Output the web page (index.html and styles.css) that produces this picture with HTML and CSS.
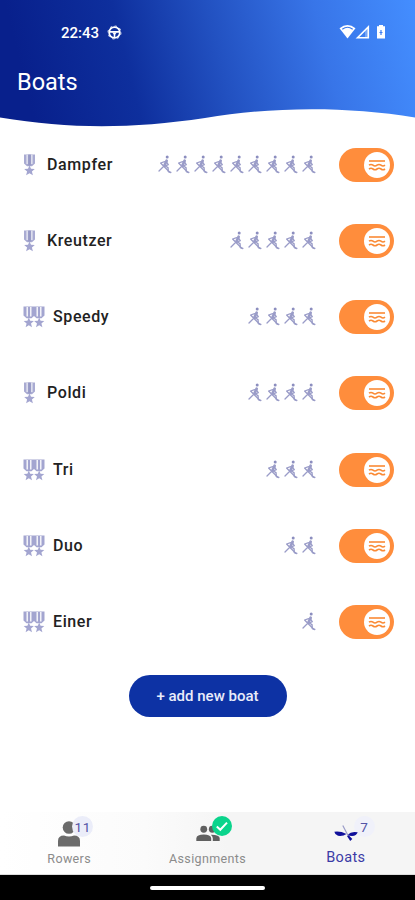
FILE: index.html
```html
<!DOCTYPE html>
<html lang="en">

<head>
    <meta charset="UTF-8">
    <meta name="viewport" content="width=device-width, initial-scale=1.0">
    <title>Boats</title>
    <link rel="stylesheet" href="styles.css">
</head>

<body>
    <!-- shared icons -->
    <svg class="icons">
        <symbol id="medal" viewBox="0 0 13 22">
            <path d="M1 0.5h11v9L9 12.3H4L1 9.5z" fill="#a9abd2" />
            <path d="M4.1 1v9M8.9 1v9" stroke="#fff" stroke-width="1" />
            <path d="M5.2 0.5h2.6v11H5.2z" fill="#9698c5" />
            <path d="M6.5 11.500l1.500 3.300 3.800.2-2.900 2.400 1 3.800-3.400-2-3.400 2 1-3.800-2.900-2.400 3.800-.2z" fill="#a3a5d0" />
        </symbol>
        <symbol id="medals" viewBox="0 0 22 22">
            <path d="M0.5 0.5h21v9l-3 2.8h-5L11 10l-2.5 2.3h-5l-3-2.8z" fill="#a3a5d0" />
            <path d="M4.2 1v9.5M7.8 1v9.5M14.2 1v9.5M17.8 1v9.5" stroke="#fff" stroke-width="1.3" />
            <path d="M5.800 11.500l1.400 3.300 3.700.2-2.900 2.400 1 3.800-3.200-2-3.200 2 1-3.800-2.900-2.400 3.700-.2zM16.200 11.500l1.400 3.300 3.700.2-2.900 2.400 1 3.800-3.200-2-3.200 2 1-3.800-2.900-2.400 3.700-.2z" fill="#a3a5d0" />
        </symbol>
        <symbol id="rower" viewBox="0 0 18 22">
            <g fill="none" stroke="#9a9cc8" stroke-linecap="round" stroke-linejoin="round">
                <path d="M10.600 6.800L8.600 11" stroke-width="2.800" />
                <path d="M8.600 7.600L4.600 9L8.500 13L13.500 18" stroke-width="1.300" />
                <path d="M10.500 8L12.300 10.600L7 13L3 17" stroke-width="1.300" />
                <path d="M8.500 11.500L12 13.600L12.300 17.500L14.800 18.500" stroke-width="1.400" />
            </g>
            <circle cx="11.200" cy="3" r="1.500" fill="#8c8ebf" />
        </symbol>
        <symbol id="waves" viewBox="0 0 18 14">
            <g fill="none" stroke="#fa8a35" stroke-width="1.600">
                <path d="M1 3h16" />
                <path d="M1 7.200q2-1.500 4 0t4 0t4 0t4 0" />
                <path d="M1 11q2-1.500 4 0t4 0t4 0t4 0" />
            </g>
        </symbol>
    </svg>

    <header class="header">
        <div class="status-bar">
            <div class="status-left">
                <span>22:43</span>
                <svg class="wheel-icon" viewBox="0 0 16 16" fill="none" stroke="#fff">
                    <circle cx="8" cy="8" r="5.700" stroke-width="1.900" />
                    <circle cx="8" cy="8" r="7" stroke-width="0.800" stroke-dasharray="2.500 3" />
                    <path d="M3 7.300h10M8 9v4" stroke-width="1.700" />
                    <path d="M5.500 8h5L8 11z" fill="#fff" stroke="none" />
                </svg>
            </div>
            <svg class="signal-icons" viewBox="0 0 48 16">
                <path d="M0.500 4.200Q8.500-2.400 16.500 4.200L8.500 14.500z" fill="#fff" />
                <path d="M3.300 5.200Q8.500 1.300 13.700 5.200" fill="none" stroke="#3b78ea" stroke-width="1.200" />
                <path d="M18.500 13.700L29.300 3V13.700z" fill="none" stroke="#fff" stroke-width="1.600" />
                <path d="M26 7v6h3V4z" fill="#fff" opacity=".3" />
                <path d="M38 2.300h2V1h4v1.300h2v12.200h-8z" fill="#fff" />
                <path d="M42 6v5M40.500 8.500h3" stroke="#3d7df2" stroke-width="1.200" />
            </svg>
        </div>
        <h1 class="title">Boats</h1>
        <svg class="wave" viewBox="0 0 415 22" preserveAspectRatio="none">
            <path d="M0 12.500C70 24 130 24 205 13C270 2 345 1 415 12.500V22H0z" fill="#fff" />
        </svg>
    </header>

    <main class="boats">
        <div class="boat">
            <svg class="medal"><use href="#medal" /></svg>
            <span class="name">Dampfer</span>
            <div class="seats">
                <svg><use href="#rower" /></svg>
                <svg><use href="#rower" /></svg>
                <svg><use href="#rower" /></svg>
                <svg><use href="#rower" /></svg>
                <svg><use href="#rower" /></svg>
                <svg><use href="#rower" /></svg>
                <svg><use href="#rower" /></svg>
                <svg><use href="#rower" /></svg>
                <svg><use href="#rower" /></svg>
            </div>
            <div class="toggle"><div class="knob"><svg><use href="#waves" /></svg></div></div>
        </div>

        <div class="boat">
            <svg class="medal"><use href="#medal" /></svg>
            <span class="name">Kreutzer</span>
            <div class="seats">
                <svg><use href="#rower" /></svg>
                <svg><use href="#rower" /></svg>
                <svg><use href="#rower" /></svg>
                <svg><use href="#rower" /></svg>
                <svg><use href="#rower" /></svg>
            </div>
            <div class="toggle"><div class="knob"><svg><use href="#waves" /></svg></div></div>
        </div>

        <div class="boat">
            <svg class="medal double"><use href="#medals" /></svg>
            <span class="name">Speedy</span>
            <div class="seats">
                <svg><use href="#rower" /></svg>
                <svg><use href="#rower" /></svg>
                <svg><use href="#rower" /></svg>
                <svg><use href="#rower" /></svg>
            </div>
            <div class="toggle"><div class="knob"><svg><use href="#waves" /></svg></div></div>
        </div>

        <div class="boat">
            <svg class="medal"><use href="#medal" /></svg>
            <span class="name">Poldi</span>
            <div class="seats">
                <svg><use href="#rower" /></svg>
                <svg><use href="#rower" /></svg>
                <svg><use href="#rower" /></svg>
                <svg><use href="#rower" /></svg>
            </div>
            <div class="toggle"><div class="knob"><svg><use href="#waves" /></svg></div></div>
        </div>

        <div class="boat">
            <svg class="medal double"><use href="#medals" /></svg>
            <span class="name">Tri</span>
            <div class="seats">
                <svg><use href="#rower" /></svg>
                <svg><use href="#rower" /></svg>
                <svg><use href="#rower" /></svg>
            </div>
            <div class="toggle"><div class="knob"><svg><use href="#waves" /></svg></div></div>
        </div>

        <div class="boat">
            <svg class="medal double"><use href="#medals" /></svg>
            <span class="name">Duo</span>
            <div class="seats">
                <svg><use href="#rower" /></svg>
                <svg><use href="#rower" /></svg>
            </div>
            <div class="toggle"><div class="knob"><svg><use href="#waves" /></svg></div></div>
        </div>

        <div class="boat">
            <svg class="medal double"><use href="#medals" /></svg>
            <span class="name">Einer</span>
            <div class="seats">
                <svg><use href="#rower" /></svg>
            </div>
            <div class="toggle"><div class="knob"><svg><use href="#waves" /></svg></div></div>
        </div>

        <button class="add-btn">+ add new boat</button>
    </main>

    <nav class="tabs">
        <div class="tab">
            <div class="tab-icon">
                <svg class="rowers-icon" viewBox="0 0 24 26" fill="#6b6b6b">
                    <circle cx="12" cy="6.500" r="6.300" />
                    <path d="M1 25.500V20q0-5.500 6-5.500 5 2 10 0 6 0 6 5.500v5.500z" />
                </svg>
                <span class="badge">11</span>
            </div>
            <span class="label">Rowers</span>
        </div>
        <div class="tab">
            <div class="tab-icon">
                <svg class="group-icon" viewBox="0 0 24 16" fill="#606060">
                    <circle cx="8" cy="4" r="3.200" />
                    <circle cx="16" cy="4" r="3.200" />
                    <path d="M1 15v-2.500Q1.500 9 8 9t7 3.500V15zM16.500 15v-2.500q0-2-1.800-3.400Q23 9 23 12.500V15z" />
                </svg>
                <svg class="check" viewBox="0 0 20 20">
                    <circle cx="10" cy="10" r="10" fill="#0bd48c" />
                    <path d="M4.800 10.500l3.500 3.300 6.700-7.200" fill="none" stroke="#fff" stroke-width="2" />
                </svg>
            </div>
            <span class="label">Assignments</span>
        </div>
        <div class="tab active">
            <div class="tab-icon">
                <span class="badge">7</span>
                <svg class="boat-icon" viewBox="0 0 24 18" fill="#10109a">
                    <path d="M0.300 7.800Q6 6.800 12.500 10Q9 12.500 4 11.800Q1 11 0.300 7.800z" />
                    <path d="M14 10.500Q17 7 23.700 8.300Q22.500 12 18 12Q15 12 14 10.500z" />
                    <path d="M14.500 11L18.300 15L16.200 17L13 12z" />
                    <path d="M8.800 1.500L14 11.500" fill="none" stroke="#9a9cc8" stroke-width="1.200" />
                </svg>
            </div>
            <span class="label">Boats</span>
        </div>
    </nav>

    <div class="system-nav">
        <div class="home-bar"></div>
    </div>
</body>

</html>
```
FILE: styles.css
```css
* {
    box-sizing: border-box;
}

body {
    margin: 0;
    width: 415px;
    height: 900px;
    display: flex;
    flex-direction: column;
    background-color: #fff;
    font-family: Roboto, "Liberation Sans", sans-serif;
    overflow: hidden;
}

svg {
    display: block;
    flex-shrink: 0;
}

.icons {
    position: absolute;
    width: 0;
    height: 0;
}

/* header */
.header {
    height: 127px;
    display: flex;
    flex-direction: column;
    background: linear-gradient(76deg, #08208c 8%, #0e2f9d 32%, #2251c1 53%, #3875e8 77%, #448eff 100%);
}

.status-bar {
    display: flex;
    justify-content: space-between;
    padding: 24px 28px 0 61px;
}

.status-left {
    display: flex;
    align-items: center;
    gap: 8px;
    height: 17px;
    color: #fff;
    font-size: 15px;
    font-weight: 500;
}

.wheel-icon {
    width: 15px;
    height: 15px;
}

.signal-icons {
    width: 48px;
    height: 16px;
}

.title {
    margin: 26px 0 0 17px;
    color: #fff;
    font-size: 23.5px;
    line-height: 30px;
    font-weight: 400;
}

.wave {
    width: 415px;
    height: 22px;
    margin-top: auto;
}

/* boat list */
.boats {
    flex: 1;
    display: flex;
    flex-direction: column;
    align-items: center;
}

.boat {
    width: 100%;
    height: 76.15px;
    display: flex;
    align-items: center;
    padding: 0 21px 0 23px;
}

.medal {
    width: 13px;
    height: 22px;
    margin-right: 11px;
}

.medal.double {
    width: 22px;
    margin-right: 8px;
}

.name {
    padding-bottom: 1px;
    color: #222;
    font-size: 16px;
    font-weight: 500;
    letter-spacing: 0.6px;
}

.seats {
    display: flex;
    margin: 0 21.5px 0 auto;
}

.seats svg {
    width: 18px;
    height: 22px;
}

.toggle {
    width: 55px;
    height: 34px;
    display: flex;
    align-items: center;
    justify-content: flex-end;
    padding-right: 4px;
    border-radius: 17px;
    background-color: #ff8d3c;
}

.knob {
    width: 26px;
    height: 26px;
    display: flex;
    align-items: center;
    justify-content: center;
    border-radius: 50%;
    background-color: #fff;
}

.knob svg {
    width: 18px;
    height: 14px;
}

.add-btn {
    width: 158px;
    height: 42px;
    margin-top: 15px;
    border: none;
    border-radius: 21px;
    background-color: #0d32a4;
    color: #e9ecfa;
    font-family: inherit;
    font-size: 15px;
    font-weight: 500;
}

/* bottom tabs */
.tabs {
    height: 63px;
    display: grid;
    grid-template-columns: repeat(3, 1fr);
    background: linear-gradient(90deg, #fff 0%, #fbfbfb 35%, #f5f5f5 55%, #f5f5f5 100%);
    border-bottom: 1px solid #ddd;
}

.tab {
    display: flex;
    flex-direction: column;
    align-items: center;
}

.tab-icon {
    position: relative;
    width: 24px;
    height: 38px;
}

.rowers-icon {
    width: 24px;
    height: 26px;
    margin-top: 9px;
}

.group-icon {
    width: 26px;
    height: 17px;
    margin-top: 13px;
}

.boat-icon {
    position: relative;
    width: 24px;
    height: 18px;
    margin-top: 12px;
}

.badge {
    position: absolute;
    top: 4px;
    left: 15px;
    width: 21px;
    height: 21px;
    border-radius: 50%;
    background-color: #ebedf9;
    color: #5353a6;
    font-size: 13.5px;
    line-height: 22px;
    text-align: center;
    letter-spacing: 0.5px;
}

.active .badge {
    left: 20px;
    background-color: #f0f1fa;
}

.check {
    position: absolute;
    top: 4px;
    left: 17px;
    width: 20px;
    height: 20px;
}

.label {
    color: #8b8b8b;
    font-size: 12.5px;
    line-height: 18px;
    letter-spacing: 0.35px;
}

.active .label {
    margin-top: -1px;
    color: #3b3ba6;
    font-size: 14.5px;
}

/* system navigation */
.system-nav {
    height: 25px;
    display: flex;
    align-items: center;
    justify-content: center;
    background-color: #000;
}

.home-bar {
    width: 115px;
    height: 4px;
    border-radius: 2px;
    background-color: #fff;
}
```
